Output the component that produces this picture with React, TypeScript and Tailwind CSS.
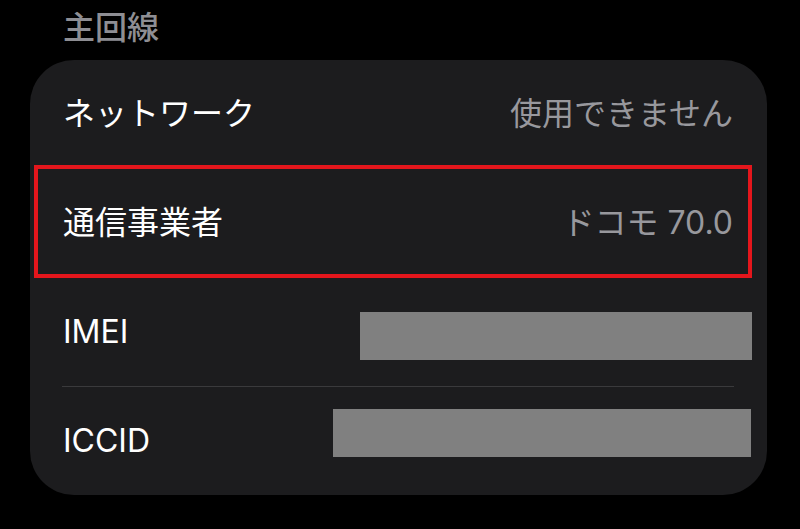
const font = { fontFamily: 'Inter, "Noto Sans CJK JP", sans-serif' }

function Row({ label, value, className }: { label: string; value?: string; className: string }) {
  return (
    <div className={`flex items-center justify-between pl-[33px] pr-[34px] ${className}`}>
      <span className="text-[32px] leading-none text-white">{label}</span>
      {value && <span className="text-[32px] leading-none text-[#98989d]">{value}</span>}
    </div>
  )
}

export default function App() {
  return (
    <div className="w-[800px] h-[529px] bg-black overflow-hidden pl-[30px] pr-[33px]" style={font}>
      <div className="h-[60px] flex items-center pl-[33px] pb-[4px]">
        <span className="text-[32px] leading-none text-[#8e8e93] font-medium">主回線</span>
      </div>
      <div className="bg-[#1c1c1e] rounded-[44px] overflow-hidden">
        <Row label="ネットワーク" value="使用できません" className="h-[107px]" />
        <div className="relative">
          <Row label="通信事業者" value="ドコモ 70.0" className="h-[111px]" />
          {/* annotation box */}
          <div className="absolute top-[-2px] bottom-[0px] left-[4px] right-[15px] border-4 border-[#e4161c]" />
        </div>
        <div className="flex items-center justify-between h-[108px] pl-[33px]">
          <span className="text-[32px] leading-none text-white">IMEI</span>
          <div className="w-[392px] h-[48px] bg-[#808080] mr-[15px] mt-[8px]" />
        </div>
        <div className="h-px bg-[#3a3a3c] ml-[32px] mr-[33px]" />
        <div className="flex items-center justify-between h-[108px] pl-[33px]">
          <span className="text-[32px] leading-none text-white">ICCID</span>
          <div className="w-[418px] h-[48px] bg-[#808080] mr-[16px] mb-[16px]" />
        </div>
      </div>
    </div>
  )
}
